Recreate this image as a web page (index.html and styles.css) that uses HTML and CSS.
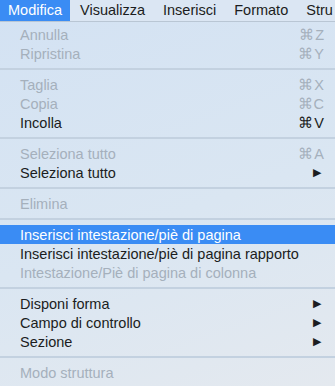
FILE: index.html
```html
<!DOCTYPE html>
<html lang="it">
<head>
  <meta charset="UTF-8" />
  <title>Menu Modifica</title>
  <link rel="stylesheet" href="styles.css">
</head>
<body>
  <nav class="menubar">
    <span class="menubar-item active">Modifica</span>
    <span class="menubar-item">Visualizza</span>
    <span class="menubar-item">Inserisci</span>
    <span class="menubar-item">Formato</span>
    <span class="menubar-item">Stru</span>
  </nav>

  <ul class="menu">
    <li class="item disabled"><span>Annulla</span><span class="key">⌘Z</span></li>
    <li class="item disabled"><span>Ripristina</span><span class="key">⌘Y</span></li>
    <li class="sep"></li>
    <li class="item disabled"><span>Taglia</span><span class="key">⌘X</span></li>
    <li class="item disabled"><span>Copia</span><span class="key">⌘C</span></li>
    <li class="item"><span>Incolla</span><span class="key">⌘V</span></li>
    <li class="sep"></li>
    <li class="item disabled"><span>Seleziona tutto</span><span class="key">⌘A</span></li>
    <li class="item"><span>Seleziona tutto</span><span class="arrow">▶</span></li>
    <li class="sep"></li>
    <li class="item disabled"><span>Elimina</span></li>
    <li class="sep"></li>
    <li class="item selected"><span>Inserisci intestazione/piè di pagina</span></li>
    <li class="item"><span>Inserisci intestazione/piè di pagina rapporto</span></li>
    <li class="item disabled"><span>Intestazione/Piè di pagina di colonna</span></li>
    <li class="sep"></li>
    <li class="item"><span>Disponi forma</span><span class="arrow">▶</span></li>
    <li class="item"><span>Campo di controllo</span><span class="arrow">▶</span></li>
    <li class="item"><span>Sezione</span><span class="arrow">▶</span></li>
    <li class="sep"></li>
    <li class="item disabled"><span>Modo struttura</span></li>
  </ul>
</body>
</html>
```

FILE: styles.css
```css
html, body {
  margin: 0;
  height: 100%;
  overflow: hidden;
}
body {
  font-family: "Liberation Sans", Arial, sans-serif;
  font-size: 14.5px;
  color: #1b1d21;
  background: linear-gradient(160deg, #d3e2f3 0%, #dae6f2 55%, #e4e9ef 100%);
}
.menubar {
  display: flex;
  height: 21px;
  background: #dbe6f3;
  border-bottom: 1px solid #b9c6d4;
  white-space: nowrap;
  overflow: hidden;
}
.menubar-item {
  padding: 0 9px;
  line-height: 21px;
}
.menubar-item.active {
  background: #3a8cf4;
  color: #fff;
  padding: 0 8px;
  margin-right: 1px;
}
.menu {
  list-style: none;
  margin: 0;
  padding: 3px 0 0;
}
.item {
  display: flex;
  justify-content: space-between;
  align-items: center;
  height: 19px;
  padding: 0 10px 0 20px;
  white-space: nowrap;
}
.item.disabled {
  color: #a5b0bc;
}
.item.selected {
  background: #3a8cf4;
  color: #fff;
}
.key {
  letter-spacing: 1px;
}
.arrow {
  font-size: 11px;
  margin-right: 4px;
}
.sep {
  height: 2px;
  margin: 5px 0;
  background: #c3d1e0;
}
```
